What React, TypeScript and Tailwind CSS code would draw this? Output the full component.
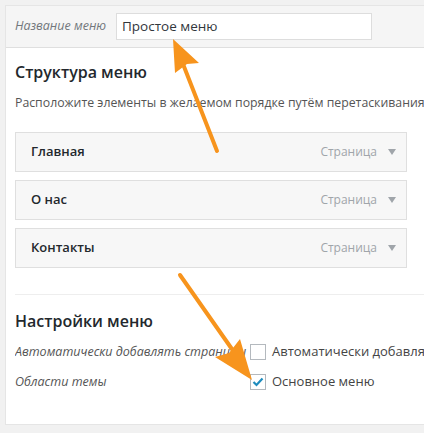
import React from "react"

const items = ["Главная", "О нас", "Контакты"]

function MenuItem({ title }: { title: string }) {
  return (
    <div className="flex h-[40px] items-center justify-between border border-[#dfdfdf] bg-[#f7f7f7] pl-[15px] pr-[10px]">
      <span className="text-[13px] font-semibold text-[#23282d]">{title}</span>
      <span className="flex items-center gap-[11px] text-[12px] text-[#a0a5aa]">
        Страница
        <svg width="8" height="6" viewBox="0 0 8 6">
          <path d="M0 0 L8 0 L4 6 Z" fill="#a0a5aa" />
        </svg>
      </span>
    </div>
  )
}

export default function App() {
  return (
    <div
      className="relative h-[433px] w-[424px] overflow-hidden bg-[#f1f1f1]"
      style={{ fontFamily: '"Open Sans", "Liberation Sans", sans-serif' }}
    >
      <div className="ml-[5px] mt-[5px] h-[420px] w-[430px] border border-[#e5e5e5] bg-white">
        <div className="flex h-[42px] items-center border-b border-[#dfdfdf] bg-[#f5f5f5] pl-[9px]">
          <span className="w-[101px] shrink-0 text-[12.5px] italic text-[#72777c]">Название меню</span>
          <div className="flex h-[27px] w-[256px] shrink-0 items-center border border-[#ddd] bg-white px-[5px] text-[13.5px] text-[#32373c]">
            Простое меню
          </div>
        </div>

        <div className="pl-[9px]">
          <h3 className="mt-[13px] text-[16px] font-semibold leading-[22px] text-[#23282d]">Структура меню</h3>
          <p className="mt-[11px] whitespace-nowrap text-[12.3px] leading-[18px] text-[#555]">
            Расположите элементы в желаемом порядке путём перетаскивания.
          </p>
          <div className="mt-[20px] flex w-[392px] flex-col gap-[8px]">
            {items.map((t) => (
              <MenuItem key={t} title={t} />
            ))}
          </div>

          <div className="mt-[26px] border-t border-[#eee]" />

          <h3 className="mt-[15px] text-[16px] font-semibold leading-[22px] text-[#23282d]">Настройки меню</h3>
          <div className="mt-[9px] flex h-[22px] items-center">
            <span className="w-[235px] shrink-0 overflow-hidden whitespace-nowrap text-[12.5px] italic text-[#555]">
              Автоматически добавлять страницы
            </span>
            <span className="h-[16px] w-[16px] shrink-0 border border-[#b4b9be] bg-white" />
            <span className="ml-[6px] whitespace-nowrap text-[13px] text-[#444]">
              Автоматически добавлять новые страницы
            </span>
          </div>
          <div className="mt-[8px] flex h-[22px] items-center">
            <span className="w-[235px] shrink-0 text-[12.5px] italic text-[#555]">Области темы</span>
            <span className="flex h-[16px] w-[16px] shrink-0 items-center justify-center border border-[#b4b9be] bg-white">
              <svg width="12" height="10" viewBox="0 0 12 10">
                <path d="M1.5 5 L4.5 8 L10.5 1.5" stroke="#1e8cbe" strokeWidth="2.2" fill="none" />
              </svg>
            </span>
            <span className="ml-[6px] text-[13px] text-[#444]">Основное меню</span>
          </div>
        </div>
      </div>

      <svg className="pointer-events-none absolute left-0 top-0" width="424" height="433" viewBox="0 0 424 433">
        <line x1="217" y1="151" x2="183" y2="64" stroke="#f7941d" strokeWidth="4" strokeLinecap="round" />
        <path d="M173 39 L199 63 L187 64 L175 73 Z" fill="#f7941d" />
        <line x1="180" y1="275" x2="234" y2="352" stroke="#f7941d" strokeWidth="4" strokeLinecap="round" />
        <path d="M252 380 L215 357 L229 353 L240 339 Z" fill="#f7941d" />
      </svg>
    </div>
  )
}
